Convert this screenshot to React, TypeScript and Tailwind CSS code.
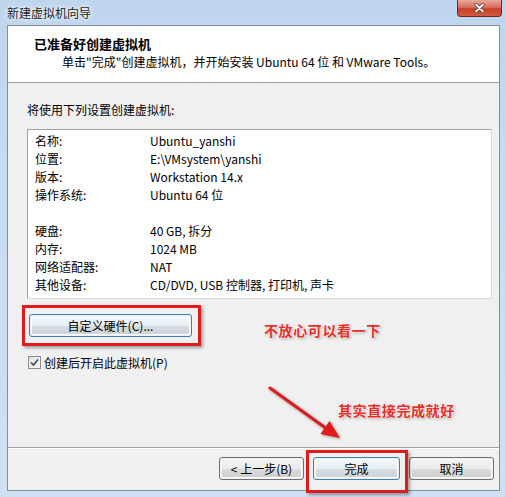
import React from "react";

const F = { fontFamily: '"Noto Sans CJK SC", "Noto Sans", sans-serif' };

function Btn({ children, w, focus }: { children: React.ReactNode; w: string; focus?: boolean }) {
  return (
    <div
      className={`${w} h-[23px] rounded-[3px] border ${focus ? "border-[#3c7fb1]" : "border-[#707070]"} p-px`}
    >
      <div
        className={`h-full w-full rounded-[2px] border border-white/80 flex items-center justify-center text-[12px] leading-none text-black ${
          focus
            ? "bg-[linear-gradient(to_bottom,#f2f7fb_0%,#e6eef5_50%,#d6dde3_51%,#ccd3da_100%)]"
            : "bg-[linear-gradient(to_bottom,#f2f2f2_0%,#ebebeb_50%,#dddddd_51%,#cfcfcf_100%)]"
        }`}
      >
        {children}
      </div>
    </div>
  );
}

const rows1: [string, string][] = [
  ["名称:", "Ubuntu_yanshi"],
  ["位置:", "E:\\VMsystem\\yanshi"],
  ["版本:", "Workstation 14.x"],
  ["操作系统:", "Ubuntu 64 位"],
];
const rows2: [string, string][] = [
  ["硬盘:", "40 GB, 拆分"],
  ["内存:", "1024 MB"],
  ["网络适配器:", "NAT"],
  ["其他设备:", "CD/DVD, USB 控制器, 打印机, 声卡"],
];

function Row({ r }: { r: [string, string] }) {
  return (
    <div className="flex h-[18px] items-center text-[12px] leading-none text-black">
      <div className="w-[115px] shrink-0">{r[0]}</div>
      <div>{r[1]}</div>
    </div>
  );
}

export default function App() {
  const redText = {
    ...F,
    textShadow: "0 0 2px #fff, 0 0 3px #fff, 1px 1px 3px rgba(0,0,0,0.45)",
  };
  return (
    <div
      style={F}
      className="relative w-[505px] h-[497px] flex flex-col overflow-hidden bg-[linear-gradient(to_bottom,#bfd5ee_0%,#c8dcf1_40%,#cfe0f2_100%)]"
    >
      {/* title bar */}
      <div className="h-[25px] shrink-0 flex items-center pl-[7px] relative">
        <span className="text-[12px] leading-none text-[#1a1a1a]" style={{ textShadow: "0 0 6px #fff, 0 0 3px #fff" }}>
          新建虚拟机向导
        </span>
        <div className="absolute right-[3px] top-0 w-[45px] h-[17px] rounded-b-[4px] border border-t-0 border-[#6b2a22] bg-[linear-gradient(to_bottom,#e8a89c_0%,#d7705e_45%,#c7402b_55%,#d25a3c_100%)] flex items-center justify-center">
          <svg width="11" height="10" viewBox="0 0 11 10">
            <path d="M2 1.5 L9 8.5 M9 1.5 L2 8.5" stroke="#5a2a22" strokeWidth="3.2" strokeLinecap="round" />
            <path d="M2 1.5 L9 8.5 M9 1.5 L2 8.5" stroke="#ffffff" strokeWidth="1.8" strokeLinecap="round" />
          </svg>
        </div>
      </div>

      {/* client area */}
      <div className="flex-1 ml-[7px] mr-[5px] mb-[6px] border border-[#7d8fa3] flex flex-col bg-[#f0f0f0]">
        {/* header */}
        <div className="h-[57px] shrink-0 bg-white border-b border-[#a0a0a0] flex flex-col">
          <div className="pl-[26px] pt-[11px] text-[13px] font-bold leading-[14px] text-black">已准备好创建虚拟机</div>
          <div className="pl-[54px] pt-[4px] text-[12px] leading-[14px] text-black">
            单击"完成"创建虚拟机，并开始安装 Ubuntu 64 位 和 VMware Tools。
          </div>
        </div>

        {/* body */}
        <div className="flex-1 pl-[19px] pt-[20px] flex flex-col">
          <div className="text-[12px] leading-[14px] text-black">将使用下列设置创建虚拟机:</div>
          <div className="mt-[12px] w-[465px] h-[170px] border border-[#a0a0a0] border-r-[#d8d8d8] border-b-[#d8d8d8] bg-white pt-[2px] pl-[7px]">
            {rows1.map((r) => (
              <Row key={r[0]} r={r} />
            ))}
            <div className="h-[18px]" />
            {rows2.map((r) => (
              <Row key={r[0]} r={r} />
            ))}
          </div>
          <div className="mt-[15px] ml-[2px]">
            <Btn w="w-[163px]" focus>
              自定义硬件(C)...
            </Btn>
          </div>
          <div className="mt-[19px] ml-[1px] flex items-center gap-[3px]">
            <div className="w-[13px] h-[13px] border border-[#8f8f8f] bg-[linear-gradient(135deg,#e0e0e0,#fafafa)] flex items-center justify-center">
              <svg width="9" height="9" viewBox="0 0 9 9">
                <path d="M1 4.5 L3.5 7 L8 1.5" stroke="#4a4a4a" strokeWidth="1.6" fill="none" />
              </svg>
            </div>
            <span className="text-[12px] leading-none text-black">创建后开启此虚拟机(P)</span>
          </div>
        </div>

        {/* footer */}
        <div className="h-[43px] shrink-0 border-t border-[#a0a0a0] shadow-[inset_0_1px_0_#ffffff] flex items-start justify-end pt-[9px] pr-[5px] gap-[9px]">
          <Btn w="w-[85px]">&lt; 上一步(B)</Btn>
          <Btn w="w-[87px]" focus>
            完成
          </Btn>
          <Btn w="w-[85px]">取消</Btn>
        </div>
      </div>

      {/* annotations */}
      <div className="absolute left-[22px] top-[305px] w-[179px] h-[41px] border-[3px] border-[#e01b1b] shadow-[2px_2px_3px_rgba(0,0,0,0.35)]" />
      <div className="absolute left-[306px] top-[450px] w-[102px] h-[43px] border-[3px] border-[#e01b1b] shadow-[2px_2px_3px_rgba(0,0,0,0.35)]" />
      <div
        className="absolute left-[264px] top-[321px] text-[14px] font-bold leading-[18px] tracking-[0.6px] text-[#e5302a]"
        style={redText}
      >
        不放心可以看一下
      </div>
      <div
        className="absolute left-[338px] top-[401px] text-[14px] font-bold leading-[18px] tracking-[0.6px] text-[#e5302a]"
        style={redText}
      >
        其实直接完成就好
      </div>
      <svg className="absolute left-0 top-0 pointer-events-none" width="505" height="497" style={{ filter: "drop-shadow(1px 1px 1.5px rgba(0,0,0,0.4))" }}>
        <path d="M270 388 L327 429" stroke="#e01b1b" strokeWidth="3" strokeLinecap="round" />
        <polygon points="340,438 320.5,434 329.5,421" fill="#e01b1b" />
      </svg>
    </div>
  );
}
